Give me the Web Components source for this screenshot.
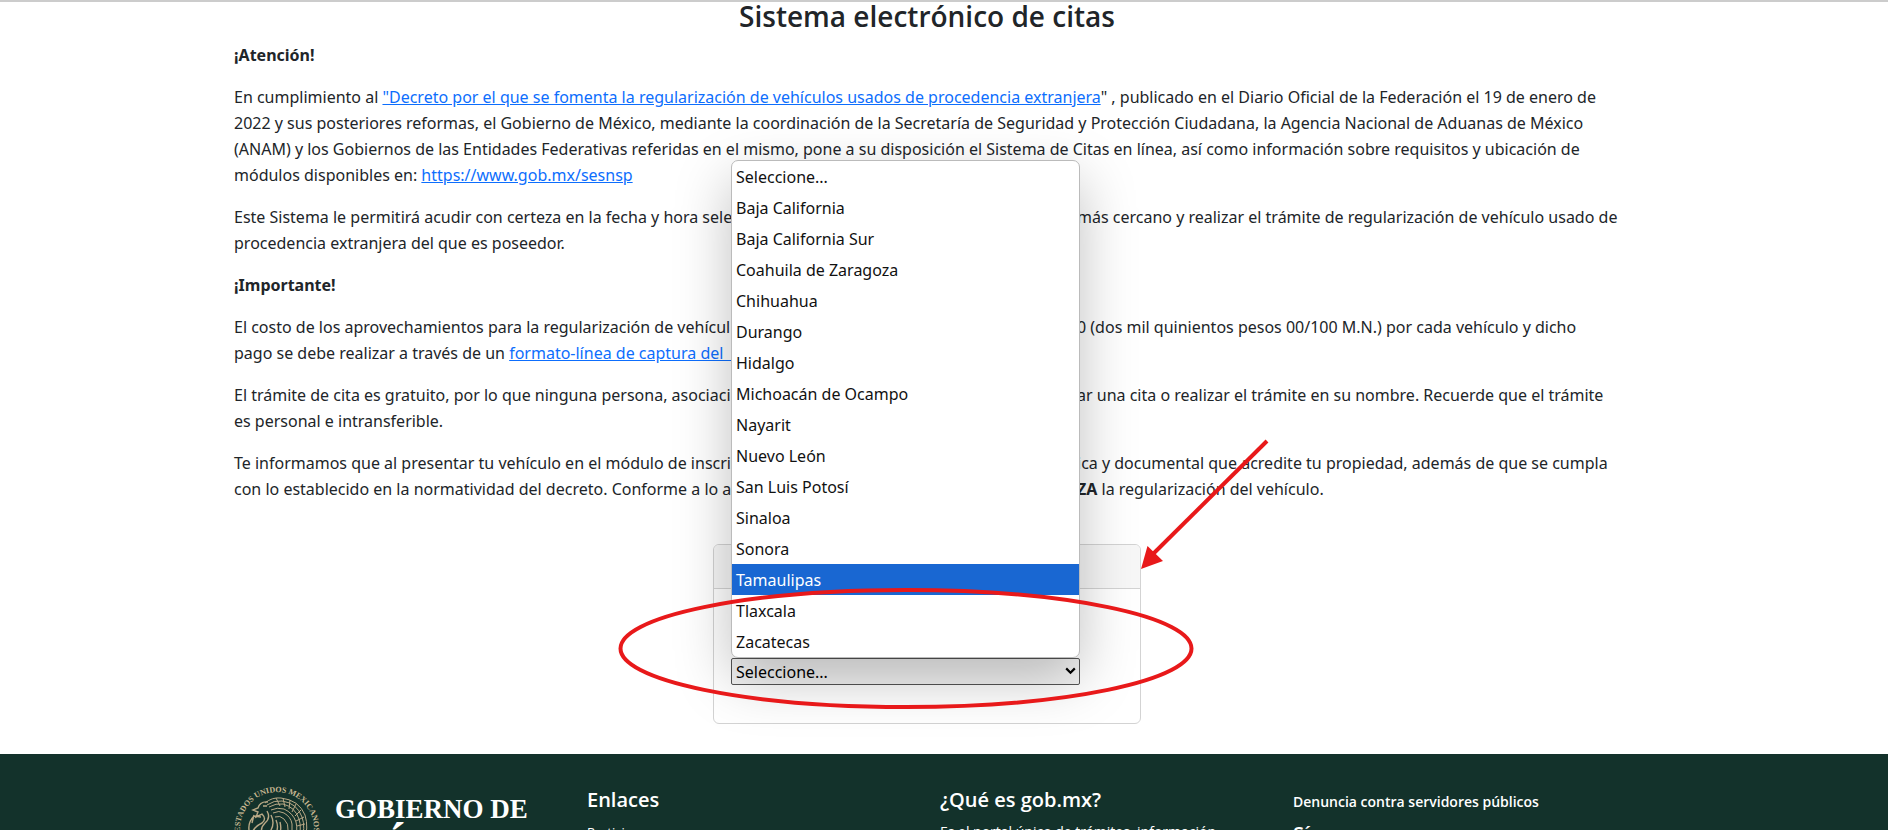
<!DOCTYPE html>
<html lang="es">
<head>
<meta charset="UTF-8">
<meta name="viewport" content="width=device-width, initial-scale=1">
<title>Sistema electrónico de citas</title>
<style>
  html { scrollbar-width: none; }
  body {
    margin: 0;
    background: #fff;
    color: #212529;
    font: 16px/26px "Noto Sans", "Open Sans", sans-serif;
  }
</style>
</head>
<body>
<citas-page>
  <aviso-texto slot="aviso"></aviso-texto>
  <entidad-card slot="form"></entidad-card>
  <gob-footer slot="footer"></gob-footer>
</citas-page>

<script>
class CitasPage extends HTMLElement {
  connectedCallback() {
    this.attachShadow({ mode: 'open' });
    this.shadowRoot.innerHTML = `
      <style>
        :host {
          display: block;
          position: relative;
          border-top: 2px solid #ccc;
          --gutter: 34px;
          --content: 1386px;
        }
        main {
          max-width: var(--content);
          margin: 0 auto;
        }
        .wrap { padding-right: var(--gutter); }
        h1 {
          margin: 0 0 12px;
          font-family: "Open Sans", sans-serif;
          font-size: 28px;
          line-height: 28px;
          font-weight: 600;
          text-align: center;
        }
      </style>
      <div class="wrap">
        <main>
          <h1>Sistema electrónico de citas</h1>
          <slot name="aviso"></slot>
          <slot name="form"></slot>
        </main>
      </div>
      <slot name="footer"></slot>
      <nota-marcas></nota-marcas>
    `;
  }
}

class AvisoTexto extends HTMLElement {
  connectedCallback() {
    this.attachShadow({ mode: 'open' });
    this.shadowRoot.innerHTML = `
      <style>
        :host { display: block; }
        p { margin: 0 0 16px; }
        a { color: #0d6efd; text-decoration: underline; }
        /* line that runs on both sides of the open list */
        .split {
          display: grid;
          grid-template-columns: 843px auto;
          white-space: nowrap;
        }
      </style>
      <p><b>¡Atención!</b></p>
      <p>En cumplimiento al <a href="#decreto">"Decreto por el que se fomenta la regularización de vehículos usados de procedencia extranjera</a>" , publicado en el Diario Oficial de la Federación el 19 de enero de<br>
        2022 y sus posteriores reformas, el Gobierno de México, mediante la coordinación de la Secretaría de Seguridad y Protección Ciudadana, la Agencia Nacional de Aduanas de México<br>
        (ANAM) y los Gobiernos de las Entidades Federativas referidas en el mismo, pone a su disposición el Sistema de Citas en línea, así como información sobre requisitos y ubicación de<br>
        módulos disponibles en: <a href="#sesnsp">https://www.gob.mx/sesnsp</a></p>
      <p><span class="split"><span>Este Sistema le permitirá acudir con certeza en la fecha y hora sele</span><span>más cercano y realizar el trámite de regularización de vehículo usado de</span></span>
        procedencia extranjera del que es poseedor.</p>
      <p><b>¡Importante!</b></p>
      <p><span class="split"><span>El costo de los aprovechamientos para la regularización de vehícul</span><span>0 (dos mil quinientos pesos 00/100 M.N.) por cada vehículo y dicho</span></span>
        pago se debe realizar a través de un <a href="#formato">formato-línea de captura del&nbsp;&nbsp;&nbsp;</a></p>
      <p><span class="split"><span>El trámite de cita es gratuito, por lo que ninguna persona, asociaci</span><span>ar una cita o realizar el trámite en su nombre. Recuerde que el trámite</span></span>
        es personal e intransferible.</p>
      <p><span class="split"><span>Te informamos que al presentar tu vehículo en el módulo de inscri</span><span>ica y documental que acredite tu propiedad, además de que se cumpla</span></span>
        <span class="split"><span>con lo establecido en la normatividad del decreto. Conforme a lo a</span><span><b>ZA</b> la regularización del vehículo.</span></span></p>
    `;
  }
}

class EntidadCard extends HTMLElement {
  connectedCallback() {
    this.attachShadow({ mode: 'open' });
    this.shadowRoot.innerHTML = `
      <style>
        :host {
          display: flex;
          justify-content: center;
          padding: 26px 0 30px;
        }
        .card {
          box-sizing: border-box;
          width: 428px;
          border: 1px solid #d3d3d3;
          border-radius: 6px;
        }
        .card-header {
          height: 43px;
          background: #f7f7f7;
          border-bottom: 1px solid #d3d3d3;
          border-radius: 5px 5px 0 0;
        }
        .card-body { padding: 69px 60px 38px 17px; }
      </style>
      <div class="card">
        <div class="card-header"></div>
        <div class="card-body"><entidad-select></entidad-select></div>
      </div>
    `;
  }
}

class EntidadSelect extends HTMLElement {
  connectedCallback() {
    const entidades = [
      'Seleccione...', 'Baja California', 'Baja California Sur', 'Coahuila de Zaragoza',
      'Chihuahua', 'Durango', 'Hidalgo', 'Michoacán de Ocampo', 'Nayarit', 'Nuevo León',
      'San Luis Potosí', 'Sinaloa', 'Sonora', 'Tamaulipas', 'Tlaxcala', 'Zacatecas'
    ];
    const activa = 'Tamaulipas';

    this.attachShadow({ mode: 'open' });
    this.shadowRoot.innerHTML = `
      <style>
        :host { display: block; position: relative; }
        select {
          display: block;
          box-sizing: border-box;
          width: 100%;
          height: 27px;
          padding: 0 4px;
          border: 1px solid #555;
          border-radius: 2px;
          background: #f4f4f4;
          color: #000;
          font: inherit;
          line-height: 24px;
          appearance: none;
        }
        .arrow {
          position: absolute;
          right: 4px;
          top: 9px;
          pointer-events: none;
        }
        ul {
          position: absolute;
          z-index: 2;
          left: 0;
          right: 0;
          bottom: 100%;
          margin: 0;
          padding: 0;
          list-style: none;
          background: #fff;
          border: 1px solid #bbb;
          border-radius: 7px;
          box-shadow: 0 20px 56px rgba(0, 0, 0, 0.25);
          color: #111;
        }
        li { padding: 2px 4px 0; line-height: 29px; }
        li[aria-selected="true"] { background: #1967d2; color: #fff; }
      </style>
      <select aria-label="Entidad">
        ${entidades.map(e => `<option>${e}</option>`).join('')}
      </select>
      <svg class="arrow" width="11" height="8" viewBox="0 0 11 8">
        <path d="M1.2 1.4 5.5 5.7 9.8 1.4" fill="none" stroke="#000" stroke-width="2.2"/>
      </svg>
      <ul role="listbox" aria-label="Entidad">
        ${entidades.map(e => `<li role="option" aria-selected="${e === activa}">${e}</li>`).join('')}
      </ul>
    `;
  }
}

// Red ellipse and arrow over the form
class NotaMarcas extends HTMLElement {
  connectedCallback() {
    this.attachShadow({ mode: 'open' });
    this.shadowRoot.innerHTML = `
      <style>
        :host {
          position: absolute;
          z-index: 5;
          top: 428px;
          left: calc(50% - 334px);
          pointer-events: none;
        }
        svg { display: block; }
      </style>
      <svg width="670" height="290" viewBox="610 430 670 290" fill="none" stroke="#e8191a" stroke-width="4">
        <ellipse cx="906" cy="648.5" rx="285.5" ry="58.5"/>
        <path d="M1267 441 1150 557"/>
        <path d="M1141 569 1147.5 546 1163 561z" fill="#e8191a" stroke="none"/>
      </svg>
    `;
  }
}

class GobFooter extends HTMLElement {
  connectedCallback() {
    this.attachShadow({ mode: 'open' });
    this.shadowRoot.innerHTML = `
      <style>
        :host {
          display: block;
          padding: 32px 34px 32px 0;
          background: #13322b;
          color: #fff;
          font-family: "Open Sans", sans-serif;
          font-size: 14px;
        }
        .cols {
          display: grid;
          grid-template-columns: repeat(4, 1fr);
          gap: 26px;
          max-width: 1386px;
          margin: 0 auto;
        }
        h2 { margin: 0 0 8px; font-size: 20px; line-height: 28px; font-weight: 600; }
        p { margin: 0; line-height: 20px; }
        a { color: inherit; text-decoration: none; }
        .link { font-size: 13px; }
        .denuncia { display: block; margin-bottom: 2px; line-height: 32px; font-weight: 600; }
      </style>
      <div class="cols">
        <gob-logo></gob-logo>
        <section>
          <h2>Enlaces</h2>
          <p><a class="link" href="#participa">Participa</a></p>
        </section>
        <section>
          <h2>¿Qué es gob.mx?</h2>
          <p>Es el portal único de trámites, información</p>
        </section>
        <section>
          <a class="denuncia" href="#denuncia">Denuncia contra servidores públicos</a>
          <h2>Síguenos en</h2>
        </section>
      </div>
    `;
  }
}

class GobLogo extends HTMLElement {
  connectedCallback() {
    this.attachShadow({ mode: 'open' });
    this.shadowRoot.innerHTML = `
      <style>
        :host { display: flex; gap: 15px; }
        .name {
          padding-top: 8px;
          font-family: "Liberation Serif", serif;
          font-weight: 700;
          font-size: 27px;
          line-height: 30px;
          white-space: nowrap;
        }
        .name span { display: block; font-size: 48px; line-height: 48px; }
        svg { flex: none; }
      </style>
      <svg width="86" height="86" viewBox="0 0 86 86" fill="none" stroke="#b9a986">
        <defs><path id="arco" d="M8 55A37 37 0 1 1 78 55"/></defs>
        <text fill="#c9b993" stroke="none" font-family="Liberation Serif, serif" font-size="8" font-weight="700">
          <textPath href="#arco" startOffset="50%" text-anchor="middle">ESTADOS UNIDOS MEXICANOS</textPath>
        </text>
        <!-- wing feathers -->
        <g stroke-width="1">
          <path d="M31 17q7-6 16-5 18 2 24 17 4 13-1 26M33 19q7-5 15-4 15 2 20 16 4 11-1 24M35 21q7-4 14-3 12 3 16 15 3 9-1 22M37 24q6-3 13-1 9 4 12 13 2 8-1 19M39 27q6-3 11 0 7 4 8 11 1 7-2 17M41 31q5-2 9 2 5 5 4 11 0 6-3 11"/>
          <path d="M42 12l4 8M49 12l2 9M56 14l-1 9M62 18l-4 8M67 24l-6 6M70 31l-8 4M71 38l-8 2M71 45l-8 1"/>
        </g>
        <!-- head, beak and snake -->
        <g stroke-width="1.4">
          <path d="M34 16q-8-1-10 6l-5 2 5 2-2 5 6-3q5 5 0 9-10 5-10 12 1 6 8 6M29 20h4M33 25q4 7-2 12-5 5-3 10 4 4 8 0M27 31l-7-1q-6 6-5 14M20 29l-2 8M37 29q4 8 0 15l3 9M42 34q3 7 0 13M46 36q2 8-1 14M14 44l5 8"/>
        </g>
      </svg>
      <div class="name">GOBIERNO DE<span>MÉXICO</span></div>
    `;
  }
}

customElements.define('citas-page', CitasPage);
customElements.define('aviso-texto', AvisoTexto);
customElements.define('entidad-card', EntidadCard);
customElements.define('entidad-select', EntidadSelect);
customElements.define('nota-marcas', NotaMarcas);
customElements.define('gob-footer', GobFooter);
customElements.define('gob-logo', GobLogo);
</script>
</body>
</html>
